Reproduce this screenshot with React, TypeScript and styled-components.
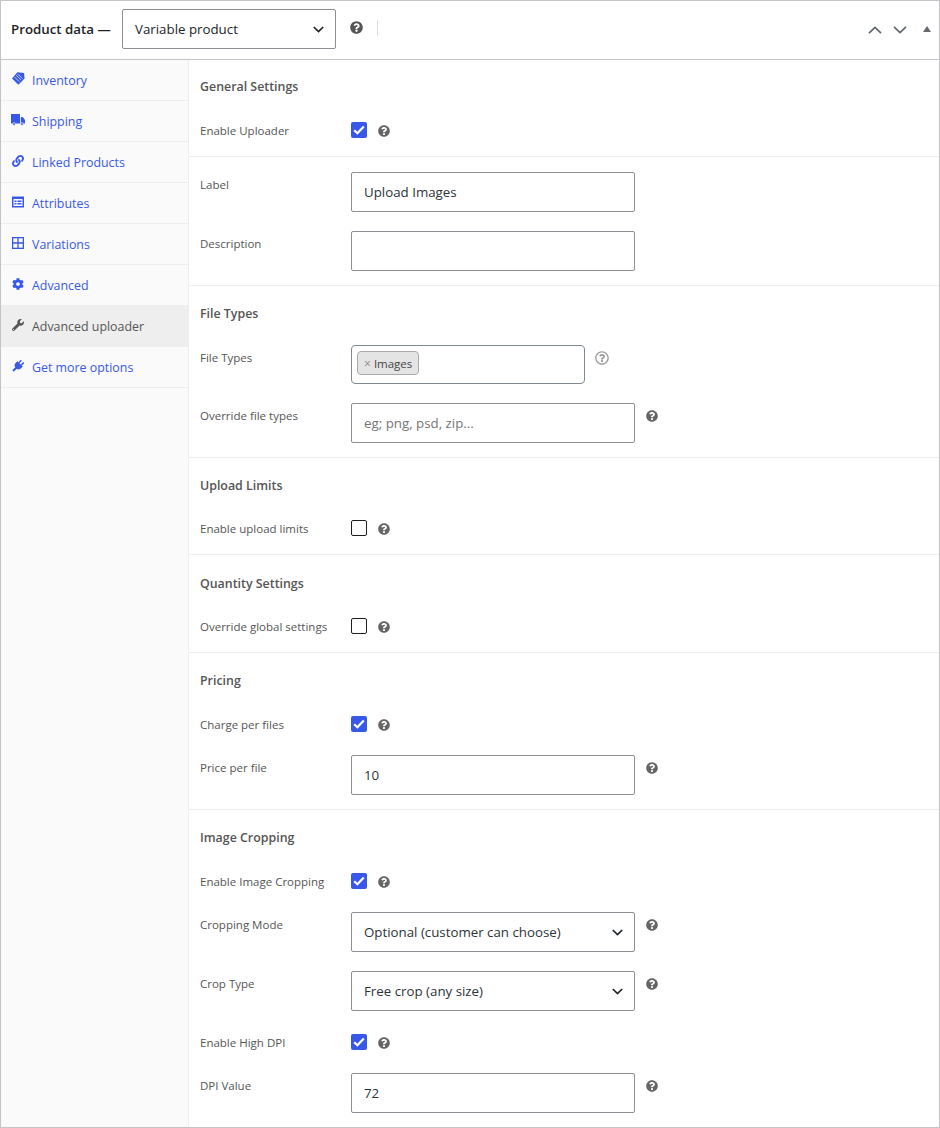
import React from "react";
import styled, { createGlobalStyle } from "styled-components";
import { FaCog, FaLink, FaQuestionCircle, FaRegQuestionCircle, FaWrench } from "react-icons/fa";

const GlobalStyle = createGlobalStyle`
  html, body {
    margin: 0;
    padding: 0;
    background: #fff;
  }
  * {
    box-sizing: border-box;
  }
  body {
    font-family: "Open Sans", "Noto Sans", sans-serif;
    color: #3c434a;
  }
`;

const TagIcon = () => (
  <svg width="13" height="13" viewBox="0 0 13 13">
    <path d="M5.4 0.2 L12 0.9 L12.6 6.6 L6.4 12.8 L0 6.4 Z" fill="currentColor" />
    <path d="M4.2 3.2 L9 8 M6 2.2 L10.4 6.6 M2.6 5 L7.2 9.6" stroke="#fafafa" strokeWidth="0.7" />
  </svg>
);

const TruckIcon = () => (
  <TruckSvg width="14" height="12" viewBox="0 0 14 12">
    <path d="M0 0 H9 V9.5 H0 Z M9.8 3 H11.8 L14 6 V9.5 H9.8 Z" fill="currentColor" />
    <circle cx="3" cy="10" r="1.4" fill="currentColor" stroke="#fafafa" strokeWidth="0.6" />
    <circle cx="11" cy="10" r="1.4" fill="currentColor" stroke="#fafafa" strokeWidth="0.6" />
  </TruckSvg>
);

const AttributesIcon = () => (
  <svg width="12" height="12" viewBox="0 0 12 12">
    <path d="M0 0.5 H12 V11.5 H0 Z M1.5 3 V10 H10.5 V3 Z" fill="currentColor" fillRule="evenodd" />
    <path d="M2.5 4.5 H4.5 V6 H2.5 Z M2.5 7 H4.5 V8.5 H2.5 Z M5.5 4.5 H9.5 V6 H5.5 Z M5.5 7 H9.5 V8.5 H5.5 Z" fill="currentColor" />
  </svg>
);

const GridIcon = () => (
  <svg width="12" height="12" viewBox="0 0 12 12" fill="none" stroke="currentColor" strokeWidth="1.3">
    <rect x="0.65" y="0.65" width="10.7" height="10.7" />
    <path d="M6 0.65 V11.35 M0.65 6 H11.35" />
  </svg>
);

const PlugIcon = () => (
  <svg width="12" height="12" viewBox="0 0 12 12">
    <g transform="rotate(45 6 6)" fill="currentColor">
      <path d="M3.6 -0.5 H5 V3 H3.6 Z M7 -0.5 H8.4 V3 H7 Z" />
      <path d="M2.2 3 H9.8 V5.5 Q9.8 8.4 7 8.8 V13 H5 V8.8 Q2.2 8.4 2.2 5.5 Z" />
    </g>
  </svg>
);

const tabs = [
  { label: "Inventory", icon: <TagIcon /> },
  { label: "Shipping", icon: <TruckIcon /> },
  { label: "Linked Products", icon: <FaLink size={12} /> },
  { label: "Attributes", icon: <AttributesIcon /> },
  { label: "Variations", icon: <GridIcon /> },
  { label: "Advanced", icon: <FaCog size={12} /> },
  { label: "Advanced uploader", icon: <FaWrench size={12} />, active: true },
  { label: "Get more options", icon: <PlugIcon /> },
];

const Chevron = () => (
  <svg width="11" height="7" viewBox="0 0 11 7">
    <path d="M0.8 1 L5.5 5.6 L10.2 1" fill="none" stroke="#1d2327" strokeWidth="1.7" />
  </svg>
);

const Help = ({ $boxed }: { $boxed?: boolean }) => (
  <HelpBadge $boxed={$boxed}>
    <FaQuestionCircle size={12} />
  </HelpBadge>
);

const Check = ({ on }: { on?: boolean }) => (
  <CheckBox $on={on}>
    {on && (
      <svg width="12" height="10" viewBox="0 0 12 10">
        <path d="M1.2 5.2 L4.4 8.2 L10.8 1.4" fill="none" stroke="#fff" strokeWidth="2.2" />
      </svg>
    )}
  </CheckBox>
);

const CheckRow = ({ label, on }: { label: string; on?: boolean }) => (
  <Row>
    <FieldLabel $center>{label}</FieldLabel>
    <Check on={on} />
    <Help />
  </Row>
);

const InputRow = ({ label, value, placeholder, help }: { label: string; value?: string; placeholder?: string; help?: boolean }) => (
  <Row $top>
    <FieldLabel>{label}</FieldLabel>
    <TextBox $muted={!!placeholder}>{value || placeholder}</TextBox>
    {help && <Help $boxed />}
  </Row>
);

const SelectRow = ({ label, value }: { label: string; value: string }) => (
  <Row $top>
    <FieldLabel>{label}</FieldLabel>
    <TextBox>
      {value}
      <Chevron />
    </TextBox>
    <Help $boxed />
  </Row>
);

const App = () => {
  return (
    <>
      <GlobalStyle />
      <Panel>
        <Header>
          <Title>Product data —</Title>
          <TypeSelect>
            Variable product
            <Chevron />
          </TypeSelect>
          <HeaderHelp>
            <FaQuestionCircle size={13} />
          </HeaderHelp>
          <Separator />
          <HeaderActions>
            <svg width="14" height="8" viewBox="0 0 14 8">
              <path d="M1 7.2 L7 1.4 L13 7.2" fill="none" stroke="#646970" strokeWidth="1.8" />
            </svg>
            <svg width="14" height="8" viewBox="0 0 14 8">
              <path d="M1 0.8 L7 6.6 L13 0.8" fill="none" stroke="#646970" strokeWidth="1.8" />
            </svg>
            <Collapse width="8" height="6" viewBox="0 0 8 6">
              <path d="M4 0 L8 6 H0 Z" fill="#646970" />
            </Collapse>
          </HeaderActions>
        </Header>
        <Body>
          <Sidebar>
            {tabs.map((tab) => (
              <Tab key={tab.label} $active={tab.active}>
                <TabIcon>{tab.icon}</TabIcon>
                {tab.label}
              </Tab>
            ))}
          </Sidebar>
          <Content>
            <Section $top="13px">
              <Heading>General Settings</Heading>
              <CheckRow label="Enable Uploader" on />
            </Section>
            <Section $top="15px">
              <InputRow label="Label" value="Upload Images" />
              <InputRow label="Description" />
            </Section>
            <Section>
              <Heading>File Types</Heading>
              <Row $top>
                <FieldLabel>File Types</FieldLabel>
                <ChipBox>
                  <Chip>
                    <ChipClose>×</ChipClose>
                    Images
                  </Chip>
                </ChipBox>
                <OutlineHelp>
                  <FaRegQuestionCircle size={14} />
                </OutlineHelp>
              </Row>
              <InputRow label="Override file types" placeholder="eg; png, psd, zip..." help />
            </Section>
            <Section $gap="18px">
              <Heading>Upload Limits</Heading>
              <CheckRow label="Enable upload limits" />
            </Section>
            <Section $top="15px" $gap="18px">
              <Heading>Quantity Settings</Heading>
              <CheckRow label="Override global settings" />
            </Section>
            <Section>
              <Heading>Pricing</Heading>
              <CheckRow label="Charge per files" on />
              <InputRow label="Price per file" value="10" help />
            </Section>
            <Section $last>
              <Heading>Image Cropping</Heading>
              <CheckRow label="Enable Image Cropping" on />
              <SelectRow label="Cropping Mode" value="Optional (customer can choose)" />
              <SelectRow label="Crop Type" value="Free crop (any size)" />
              <CheckRow label="Enable High DPI" on />
              <InputRow label="DPI Value" value="72" help />
            </Section>
          </Content>
        </Body>
      </Panel>
    </>
  );
};

export default App;

const Panel = styled.div`
  width: 940px;
  height: 1128px;
  border: 1px solid #c3c4c7;
  display: flex;
  flex-direction: column;
  overflow: hidden;
`;

const Header = styled.div`
  height: 59px;
  flex-shrink: 0;
  display: flex;
  align-items: center;
  padding: 0 8px 2px 10px;
  border-bottom: 1px solid #c3c4c7;
`;

const Title = styled.div`
  font-size: 13.3px;
  font-weight: 600;
  color: #1d2327;
  width: 111px;
`;

const TypeSelect = styled.div`
  width: 214px;
  height: 40px;
  border: 1px solid #8c8f94;
  border-radius: 2px;
  padding: 0 11px 0 12px;
  display: flex;
  align-items: center;
  justify-content: space-between;
  font-size: 13.3px;
  color: #1d2327;
`;

const HeaderHelp = styled.span`
  display: flex;
  color: #555;
  margin: -4px 0 0 14px;
`;

const Separator = styled.span`
  width: 1px;
  height: 16px;
  background: #dcdcde;
  margin: -2px 0 0 14px;
`;

const HeaderActions = styled.div`
  margin-left: auto;
  display: flex;
  align-items: center;
  gap: 11px;
  margin-top: 2px;
`;

const Collapse = styled.svg`
  margin: -2px 0 0 5px;
`;

const Body = styled.div`
  flex: 1;
  display: flex;
  min-height: 0;
`;

const Sidebar = styled.div`
  width: 188px;
  flex-shrink: 0;
  background: #fafafa;
  border-right: 1px solid #eee;
`;

const Tab = styled.div<{ $active?: boolean }>`
  height: 41px;
  display: flex;
  align-items: center;
  padding-left: 11px;
  font-size: 12.4px;
  color: ${(p) => (p.$active ? "#555" : "#3858e9")};
  background: ${(p) => (p.$active ? "#eee" : "transparent")};
  border-bottom: 1px solid #eee;
`;

const TabIcon = styled.span`
  width: 20px;
  display: flex;
  margin-top: -3px;
`;

const TruckSvg = styled.svg`
  margin-left: -1px;
  flex-shrink: 0;
`;

const Content = styled.div`
  flex: 1;
  min-width: 0;
`;

const Section = styled.div<{ $top?: string; $gap?: string; $last?: boolean }>`
  display: flex;
  flex-direction: column;
  gap: ${(p) => p.$gap || "19px"};
  padding: ${(p) => p.$top || "14px"} 0 ${(p) => (p.$last ? "0" : "14px")} 11px;
  border-bottom: ${(p) => (p.$last ? "none" : "1px solid #eee")};
`;

const Heading = styled.div`
  font-size: 12.4px;
  line-height: 24px;
  padding-top: 2px;
  font-weight: 600;
  color: #555;
`;

const Row = styled.div<{ $top?: boolean }>`
  display: flex;
  align-items: ${(p) => (p.$top ? "flex-start" : "center")};
  min-height: 24px;
`;

const FieldLabel = styled.label<{ $center?: boolean }>`
  width: 151px;
  flex-shrink: 0;
  font-size: 11.5px;
  line-height: 18px;
  color: #555;
  padding-top: ${(p) => (p.$center ? "2px" : "4px")};
`;

const CheckBox = styled.span<{ $on?: boolean }>`
  width: 16px;
  height: 16px;
  border-radius: 2px;
  display: flex;
  align-items: center;
  justify-content: center;
  background: ${(p) => (p.$on ? "#3858e9" : "#fff")};
  border: ${(p) => (p.$on ? "none" : "1.5px solid #1e1e1e")};
`;

const HelpBadge = styled.span<{ $boxed?: boolean }>`
  display: flex;
  color: #666;
  margin: ${(p) => (p.$boxed ? "7px 0 0 11px" : "2px 0 0 11px")};
`;

const TextBox = styled.div<{ $muted?: boolean }>`
  width: 284px;
  height: 40px;
  flex-shrink: 0;
  border: 1px solid #8c8f94;
  border-radius: 2px;
  padding: 0 11px 0 12px;
  display: flex;
  align-items: center;
  justify-content: space-between;
  font-size: 13.3px;
  color: ${(p) => (p.$muted ? "#757575" : "#2c3338")};
`;

const ChipBox = styled.div`
  width: 234px;
  height: 39px;
  flex-shrink: 0;
  border: 1px solid #7e8993;
  border-radius: 4px;
  padding: 5px;
  display: flex;
  align-items: flex-start;
`;

const Chip = styled.span`
  height: 24px;
  padding: 0 6px;
  background: #e4e4e4;
  border: 1px solid #aaa;
  border-radius: 4px;
  display: flex;
  align-items: center;
  gap: 3px;
  font-size: 11.5px;
  color: #444;
`;

const ChipClose = styled.span`
  color: #888;
  font-size: 12px;
`;

const OutlineHelp = styled.span`
  display: flex;
  color: #999;
  margin: 6px 0 0 10px;
`;
